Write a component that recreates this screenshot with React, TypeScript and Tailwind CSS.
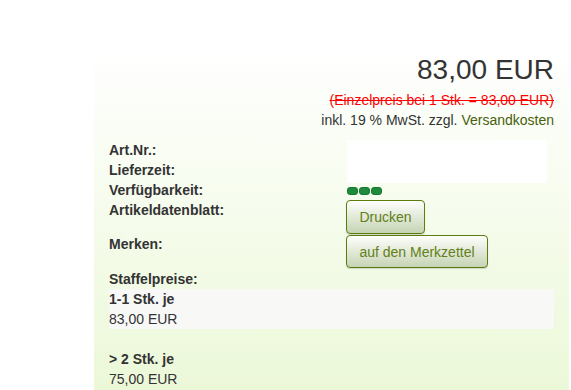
import React from "react";

export default function App() {
  return (
    <div
      className="w-[571px] h-[390px] overflow-hidden bg-white pt-[50px] pl-[94px] pr-[2px] text-[#333333]"
      style={{ fontFamily: '"Liberation Sans", Arial, sans-serif' }}
    >
      <div className="h-[400px] bg-gradient-to-b from-white to-[#e8f7d1] pl-[15px] pr-[15px]">
        <div className="flex flex-col items-end text-[14px] leading-[20px]">
          <div className="text-[28px] leading-[40px]">83,00 EUR</div>
          <div className="text-[#ff0000] line-through">(Einzelpreis bei 1 Stk. = 83,00 EUR)</div>
          <div>
            inkl. 19 % MwSt. zzgl. <span className="text-[#46600e]">Versandkosten</span>
          </div>
        </div>

        <div className="mt-[10px] flex text-[14px] leading-[20px]">
          <div className="w-[238px] font-bold">
            <div>Art.Nr.:</div>
            <div>Lieferzeit:</div>
            <div>Verfügbarkeit:</div>
            <div>Artikeldatenblatt:</div>
            <div className="mt-[14px]">Merken:</div>
          </div>
          <div className="flex flex-col items-start">
            <div className="w-[200px] h-[43px] bg-white" />
            <div className="mt-[4px] flex gap-[1px]">
              <span className="w-[11px] h-[8px] rounded-[3px] bg-[#1f8a3b] border border-[#17782f]" />
              <span className="w-[11px] h-[8px] rounded-[3px] bg-[#1f8a3b] border border-[#17782f]" />
              <span className="w-[11px] h-[8px] rounded-[3px] bg-[#1f8a3b] border border-[#17782f]" />
            </div>
            <button className="mt-[5px] -ml-[1px] h-[34px] w-[79px] rounded-[4px] border border-[#5a7d0e] bg-gradient-to-b from-[#fefefc] to-[#c6d4b4] text-[14px] text-[#627f18] shadow-[0_1px_1px_rgba(0,0,0,0.15)]">
              Drucken
            </button>
            <button className="mt-[1px] -ml-[1px] h-[33px] w-[142px] rounded-[4px] border border-[#5a7d0e] bg-gradient-to-b from-[#fefefc] to-[#c6d4b4] text-[14px] text-[#627f18] shadow-[0_1px_1px_rgba(0,0,0,0.15)]">
              auf den Merkzettel
            </button>
          </div>
        </div>

        <div className="mt-[1px] text-[14px] leading-[20px]">
          <div className="font-bold">Staffelpreise:</div>
          <div className="bg-[#f8f8f7]">
            <div className="font-bold">1-1 Stk. je</div>
            <div>83,00 EUR</div>
          </div>
          <div className="mt-[20px]">
            <div className="font-bold">&gt; 2 Stk. je</div>
            <div>75,00 EUR</div>
          </div>
        </div>
      </div>
    </div>
  );
}
